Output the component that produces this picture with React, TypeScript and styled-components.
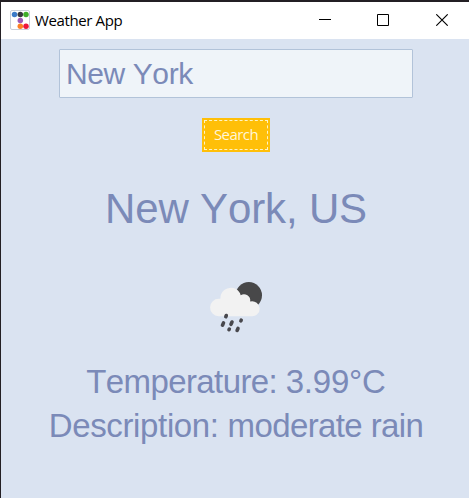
import React from "react";
import styled, { createGlobalStyle } from "styled-components";

const GlobalStyle = createGlobalStyle`
  * { box-sizing: border-box; }
  body { margin: 0; background: #231f24; overflow: hidden; }
`;

const Frame = styled.div`
  height: 100vh;
  padding: 2px 0 0 1px;
  display: flex;
  flex-direction: column;
  background: #231f24;
`;

const TitleBar = styled.header`
  flex: none;
  height: 37px;
  padding: 0 20px 1px 9px;
  display: flex;
  align-items: center;
  background: #fff;
`;

const AppName = styled.span`
  margin-left: 5px;
  font: 15px/20px "Open Sans", "Noto Sans", sans-serif;
  letter-spacing: -0.38px;
  color: #000;
  white-space: nowrap;
`;

const WindowControls = styled.div`
  margin-left: auto;
  display: flex;
  gap: 46px;
`;

const ControlButton = styled.button`
  width: 13px;
  height: 12px;
  padding: 0;
  border: 0;
  background: none;
  display: flex;
`;

const Content = styled.main`
  flex: 1;
  padding: 10px 0 0 2px;
  display: flex;
  flex-direction: column;
  align-items: center;
  background: #dae3f1;
  color: #7b8ab8;
  font-family: "Liberation Sans", Arial, sans-serif;
  font-kerning: none;
`;

const CityInput = styled.input`
  width: 354px;
  height: 49px;
  padding: 0 6px;
  border: 1px solid #b2c3d9;
  border-radius: 1px;
  background: #eff4f9;
  color: inherit;
  font: 30px/47px "Liberation Sans", Arial, sans-serif;
  font-kerning: none;
  letter-spacing: -0.4px;
  outline: none;
`;

const SearchButton = styled.button`
  width: 68px;
  height: 34px;
  margin-top: 20px;
  padding: 2px;
  border: 0;
  background: #ffbf08;
  color: #fff6d8;
  display: flex;
`;

const FocusRing = styled.span`
  flex: 1;
  border: 1px dashed #fff3c4;
  font: 15px/27px "Open Sans", "Noto Sans", sans-serif;
  letter-spacing: -0.55px;
`;

const Location = styled.h1`
  margin: 32px 0 0;
  font-size: 42px;
  line-height: 50px;
  font-weight: 400;
  letter-spacing: -0.15px;
  white-space: nowrap;
`;

const WeatherIcon = styled.svg`
  flex: none;
  margin-top: 46px;
`;

const Readings = styled.section`
  margin-top: 26px;
  display: flex;
  flex-direction: column;
  align-items: center;
`;

const Reading = styled.p`
  margin: 0;
  font-size: 33px;
  line-height: 44px;
  white-space: nowrap;
`;

const Tracked = styled.span<{ $spacing: number }>`
  letter-spacing: ${(p) => p.$spacing}px;
`;

const dots = [
  { x: 4.5, y: 4.5, color: "#3c7bc8" },
  { x: 10.3, y: 4.5, color: "#36373d" },
  { x: 16, y: 4.5, color: "#3fae29" },
  { x: 10.3, y: 10.4, color: "#9b59b6" },
  { x: 10.3, y: 16.3, color: "#fd7e22" },
  { x: 16, y: 16.3, color: "#ee1539" },
];

const AppIcon = () => (
  <svg width="20" height="20" viewBox="0 0 20 20">
    <rect x="0.5" y="0.5" width="19" height="19" rx="1.5" fill="#fff" stroke="#c9ced8" />
    {dots.map((d) => (
      <circle key={d.color} cx={d.x} cy={d.y} r="2.75" fill={d.color} />
    ))}
  </svg>
);

const RainIcon = () => (
  <WeatherIcon width="54" height="54" viewBox="0 0 54 54">
    <circle cx="39.8" cy="15.3" r="13.2" fill="#484849" />
    <path
      d="M9.6 36.2a8.7 8.7 0 0 1 .3-17.4h1.4A10.6 10.6 0 0 1 30.2 12A10.2 10.2 0 0 1 31.7 15.2A6.3 6.3 0 0 1 41.2 21.4A7.6 7.6 0 1 1 41.6 36.2Z"
      fill="#f2f2f2"
    />
    <g stroke="#48484d" strokeWidth="3.6" strokeLinecap="round">
      <path d="M17.3 35.5l-.5 1.2M14.5 42.9l-1 2.3M23 42l-1 2.3M32.2 40.2l-.3.7M20.3 49.1l-.3.5M29 48.4l-.9 2" />
    </g>
  </WeatherIcon>
);

export default function App() {
  return (
    <Frame>
      <GlobalStyle />
      <TitleBar>
        <AppIcon />
        <AppName>Weather App</AppName>
        <WindowControls>
          <ControlButton aria-label="Minimize">
            <svg width="13" height="12"><path d="M1 5.5h12" stroke="#000" /></svg>
          </ControlButton>
          <ControlButton aria-label="Maximize">
            <svg width="13" height="12"><path d="M.5.5h11v11H.5z" fill="none" stroke="#000" /></svg>
          </ControlButton>
          <ControlButton aria-label="Close">
            <svg width="13" height="12"><path d="M.3.3l11.4 11.4M11.7.3L.3 11.7" stroke="#000" strokeWidth="1.1" /></svg>
          </ControlButton>
        </WindowControls>
      </TitleBar>
      <Content>
        <CityInput defaultValue="New York" spellCheck={false} />
        <SearchButton>
          <FocusRing>Search</FocusRing>
        </SearchButton>
        <Location>New York, US</Location>
        <RainIcon />
        <Readings>
          <Reading>
            <Tracked $spacing={-0.6}>Temperature: </Tracked>
            <Tracked $spacing={-0.2}>3.99°C</Tracked>
          </Reading>
          <Reading>
            <Tracked $spacing={-0.35}>Description: </Tracked>
            <Tracked $spacing={-0.6}>moderate rain</Tracked>
          </Reading>
        </Readings>
      </Content>
    </Frame>
  );
}
